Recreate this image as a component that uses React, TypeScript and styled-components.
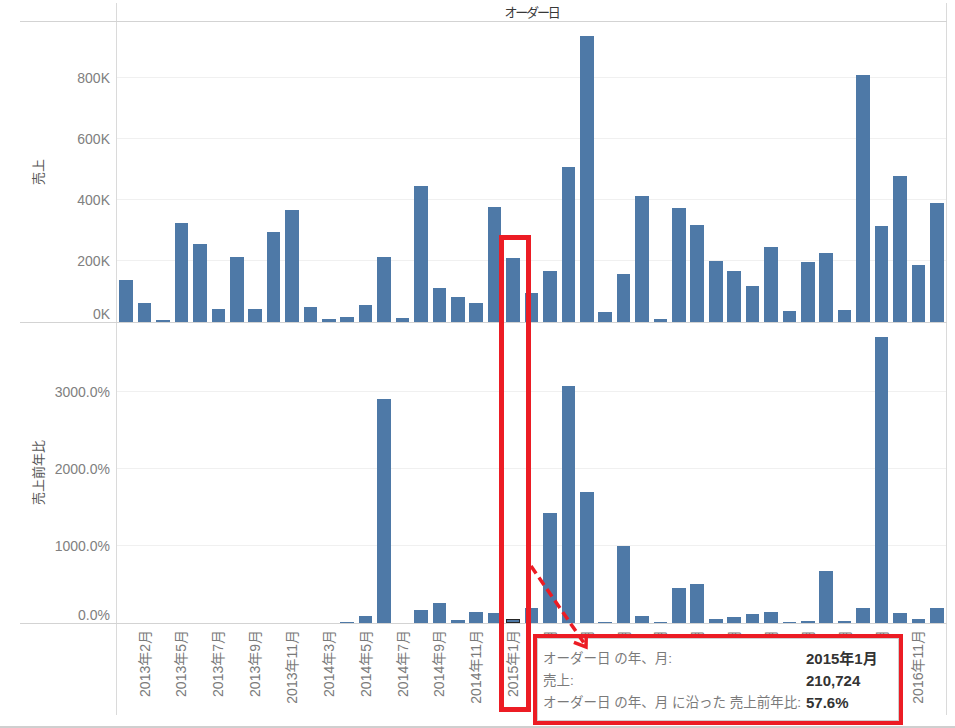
import styled, { createGlobalStyle } from "styled-components";

const FONT = `"Liberation Sans", "Noto Sans CJK JP", sans-serif`;
const RED = "#ec1c24";
const BAR = "#4e79a7";
const LINE = "#d3d3d3";

// 売上 (K) per month, 45 months
const sales = [
  139, 63, 8, 326, 257, 44, 214, 44, 294, 366, 48, 11, 15, 56, 212, 14, 445,
  113, 82, 63, 378, 211, 94, 169, 509, 940, 34, 157, 414, 9, 373, 318, 200,
  166, 119, 246, 37, 198, 225, 40, 811, 316, 480, 186, 392,
];

// 売上前年比 (%), first year has no previous year
const growth: (number | null)[] = [
  ...Array(12).fill(null),
  17, 86, 2916, null, 169, 264, 34, 147, 134, 57.6, 195, 1434, 3085, 1703, 17,
  1005, 95, 17, 455, 507, 47, 82, 121, 147, 17, 26, 671, 26, 190, 3718, 134,
  56, 190,
];

const monthLabels: Record<number, string> = {
  1: "2013年2月",
  3: "2013年5月",
  5: "2013年7月",
  7: "2013年9月",
  9: "2013年11月",
  11: "2014年3月",
  13: "2014年5月",
  15: "2014年7月",
  17: "2014年9月",
  19: "2014年11月",
  21: "2015年1月",
  23: "2015年3月",
  25: "2015年5月",
  27: "2015年7月",
  29: "2015年9月",
  31: "2015年11月",
  33: "2016年1月",
  35: "2016年3月",
  37: "2016年5月",
  39: "2016年7月",
  41: "2016年9月",
  43: "2016年11月",
};

const SELECTED = 21;
const PANE_HEIGHT = 300;
const SALES_SCALE = 0.3048; // px per K
const GROWTH_SCALE = 0.07693; // px per %

const salesTicks = [0, 200, 400, 600, 800];
const growthTicks = [0, 1000, 2000, 3000];

const GlobalStyle = createGlobalStyle`
  html, body {
    margin: 0;
    padding: 0;
    background: #ffffff;
    font-family: ${FONT};
  }
`;

export default function App() {
  return (
    <>
      <GlobalStyle />
      <Frame>
        <Row $height={19} $line>
          <AxisCell />
          <PlotCell>
            <HeaderTitle>オーダー日</HeaderTitle>
          </PlotCell>
        </Row>

        <ChartRow
          title="売上"
          ticks={salesTicks}
          scale={SALES_SCALE}
          format={(v) => `${v}K`}
          values={sales}
        />
        <ChartRow
          title="売上前年比"
          ticks={growthTicks}
          scale={GROWTH_SCALE}
          format={(v) => `${v}.0%`}
          values={growth}
          highlight={SELECTED}
        />

        <Row $height={91}>
          <AxisCell />
          <PlotCell>
            <LabelStrip>
              {sales.map((_, i) => (
                <Band key={i} $top>
                  {monthLabels[i] && <MonthLabel>{monthLabels[i]}</MonthLabel>}
                </Band>
              ))}
            </LabelStrip>
          </PlotCell>
        </Row>

        <SelectionBox />
        <Callout>
          <TooltipBox>
            <TipLabel>オーダー日 の年、月:</TipLabel>
            <TipValue>2015年1月</TipValue>
            <TipLabel>売上:</TipLabel>
            <TipValue>210,724</TipValue>
            <TipLabel>オーダー日 の年、月 に沿った 売上前年比:</TipLabel>
            <TipValue>57.6%</TipValue>
          </TooltipBox>
        </Callout>
        <ArrowLayer width="80" height="100" viewBox="0 0 80 100">
          <line
            x1="11"
            y1="11"
            x2="64"
            y2="88"
            stroke={RED}
            strokeWidth="3.5"
            strokeDasharray="9 5"
          />
          <polyline
            points="66.3,79 66,92 53.9,87.3"
            fill="none"
            stroke={RED}
            strokeWidth="3.5"
          />
        </ArrowLayer>
      </Frame>
    </>
  );
}

interface ChartRowProps {
  title: string;
  ticks: number[];
  scale: number;
  format: (v: number) => string;
  values: (number | null)[];
  highlight?: number;
}

const ChartRow: React.FunctionComponent<ChartRowProps> = ({
  title,
  ticks,
  scale,
  format,
  values,
  highlight,
}) => (
  <Row $height={PANE_HEIGHT + 1} $line>
    <AxisCell>
      <TitleSlot>
        <AxisTitle>{title}</AxisTitle>
      </TitleSlot>
      <TickSlot>
        {ticks.map((t) => (
          <Tick key={t} style={{ bottom: Math.max(0, t * scale - 8) }}>
            {format(t)}
          </Tick>
        ))}
      </TickSlot>
    </AxisCell>
    <PlotCell>
      {ticks
        .filter((t) => t > 0)
        .map((t) => (
          <GridLine key={t} style={{ bottom: t * scale }} />
        ))}
      <BarStrip>
        {values.map((v, i) => (
          <Band key={i}>
            {v !== null && (
              <Bar $selected={i === highlight} style={{ height: v * scale }} />
            )}
          </Band>
        ))}
      </BarStrip>
    </PlotCell>
  </Row>
);

const Frame = styled.div`
  position: relative;
  width: 955px;
  height: 728px;
  box-sizing: border-box;
  padding: 3px 0 0 20px;
  border-bottom: 2px solid #cfcfcf;
  overflow: hidden;
`;

const Row = styled.div<{ $height: number; $line?: boolean }>`
  display: flex;
  width: 927px;
  height: ${(p) => p.$height}px;
  box-sizing: border-box;
  border-bottom: ${(p) => (p.$line ? `1px solid ${LINE}` : "none")};
`;

const AxisCell = styled.div`
  display: flex;
  width: 96px;
  flex-shrink: 0;
`;

const TitleSlot = styled.div`
  display: flex;
  align-items: center;
  justify-content: center;
  width: 34px;
`;

const AxisTitle = styled.div`
  writing-mode: vertical-rl;
  text-orientation: sideways;
  transform: rotate(180deg);
  font-size: 13px;
  color: #555555;
`;

const TickSlot = styled.div`
  position: relative;
  flex: 1;
`;

const Tick = styled.div`
  position: absolute;
  right: 6px;
  font-size: 14px;
  line-height: 16px;
  color: #808080;
  white-space: nowrap;
`;

const PlotCell = styled.div`
  position: relative;
  width: 831px;
  flex-shrink: 0;
  box-sizing: border-box;
  border-left: 1px solid #dadada;
  border-right: 1px solid #dadada;
`;

const HeaderTitle = styled.div`
  text-align: center;
  font-size: 13px;
  letter-spacing: -2.2px;
  line-height: 19px;
  color: #383838;
`;

const GridLine = styled.div`
  position: absolute;
  left: 0;
  right: 0;
  height: 1px;
  background: #f0f0f0;
`;

const BarStrip = styled.div`
  position: relative;
  display: flex;
  height: 100%;
`;

const LabelStrip = styled.div`
  display: flex;
  height: 100%;
  padding-top: 6px;
  box-sizing: border-box;
`;

const Band = styled.div<{ $top?: boolean }>`
  flex: 1;
  display: flex;
  justify-content: center;
  align-items: ${(p) => (p.$top ? "flex-start" : "flex-end")};
`;

const Bar = styled.div<{ $selected?: boolean }>`
  width: 13.6px;
  box-sizing: border-box;
  background: ${BAR};
  border: ${(p) => (p.$selected ? "1px solid #262626" : "none")};
`;

const MonthLabel = styled.div`
  writing-mode: vertical-rl;
  text-orientation: sideways;
  transform: rotate(180deg);
  font-size: 14px;
  line-height: 16px;
  color: #7a7a7a;
  white-space: nowrap;
`;

const SelectionBox = styled.div`
  position: absolute;
  left: 499px;
  top: 235px;
  width: 32px;
  height: 477px;
  box-sizing: border-box;
  border: 5px solid ${RED};
`;

const Callout = styled.div`
  position: absolute;
  left: 533px;
  top: 634px;
  width: 370px;
  height: 91px;
  box-sizing: border-box;
  border: 4px solid ${RED};
`;

const TooltipBox = styled.div`
  display: grid;
  grid-template-columns: 259px auto;
  column-gap: 4px;
  align-content: start;
  height: 100%;
  box-sizing: border-box;
  padding: 9px 5px 0;
  border: 1px solid #cfcfcf;
  background: #ffffff;
`;

const TipLabel = styled.span`
  font-size: 13.5px;
  line-height: 22px;
  color: #7a7a7a;
  white-space: nowrap;
`;

const TipValue = styled.span`
  font-size: 15px;
  font-weight: 700;
  line-height: 22px;
  color: #333333;
  white-space: nowrap;
`;

const ArrowLayer = styled.svg`
  position: absolute;
  left: 520px;
  top: 555px;
  pointer-events: none;
`;
